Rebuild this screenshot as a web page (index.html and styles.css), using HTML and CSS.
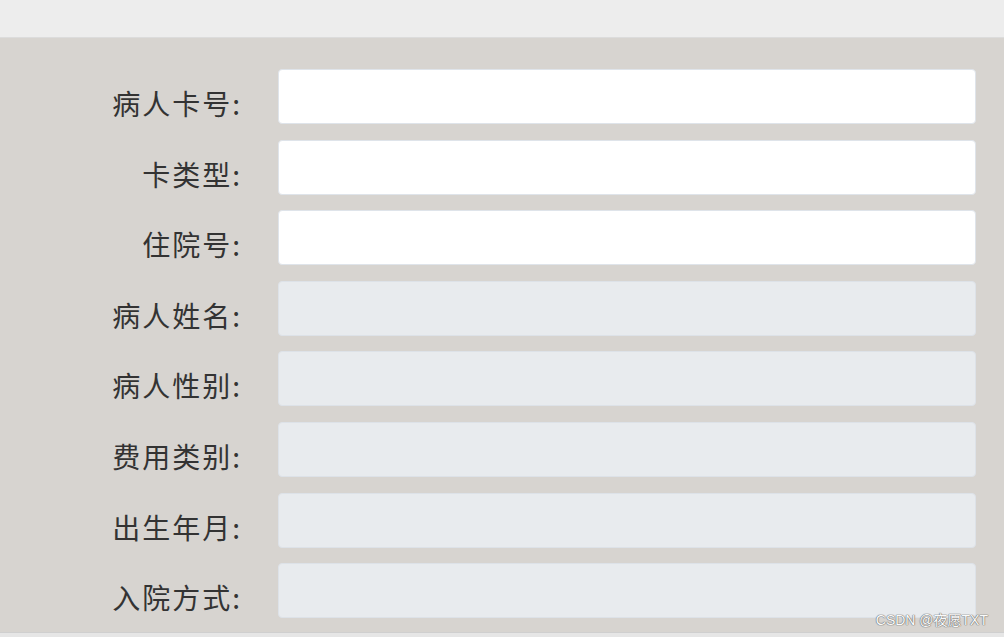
FILE: index.html
```html
<!DOCTYPE html>
<html lang="zh-CN">
<head>
<meta charset="utf-8">
<title>病人信息</title>
<link rel="stylesheet" href="styles.css">
</head>
<body>
<div class="page">
  <div class="topbar"></div>
  <div class="main">
    <form class="form">
      <label class="row"><span class="label">病人卡号:</span><input class="field" type="text"></label>
      <label class="row"><span class="label">卡类型:</span><input class="field" type="text"></label>
      <label class="row"><span class="label">住院号:</span><input class="field" type="text"></label>
      <label class="row"><span class="label">病人姓名:</span><input class="field" type="text" disabled></label>
      <label class="row"><span class="label">病人性别:</span><input class="field" type="text" disabled></label>
      <label class="row"><span class="label">费用类别:</span><input class="field" type="text" disabled></label>
      <label class="row"><span class="label">出生年月:</span><input class="field" type="text" disabled></label>
      <label class="row"><span class="label">入院方式:</span><input class="field" type="text" disabled></label>
    </form>
  </div>
  <div class="bottombar"></div>
  <div class="watermark">CSDN @夜愿TXT</div>
</div>
</body>
</html>
```
FILE: styles.css
```css
html, body {
  margin: 0;
  padding: 0;
}
body {
  width: 1004px;
  height: 637px;
  overflow: hidden;
  font-family: "Noto Sans CJK SC", "Noto Sans", sans-serif;
}
.page {
  position: relative;
  display: flex;
  flex-direction: column;
  height: 637px;
  background: #d7d4d0;
}
.topbar {
  height: 38px;
  background: #ededed;
  border-bottom: 1px solid #dcdcdc;
  box-sizing: border-box;
  flex: none;
}
.main {
  flex: 1;
  padding: 31px 28px 0 0;
}
.form {
  display: flex;
  flex-direction: column;
  gap: 15.6px;
  margin: 0;
}
.row {
  display: grid;
  grid-template-columns: 242px 1fr;
  column-gap: 36px;
  align-items: center;
}
.label {
  text-align: right;
  font-size: 28px;
  letter-spacing: 2px;
  color: #333333;
  line-height: 40px;
  padding-top: 13px;
}
.field {
  height: 55px;
  box-sizing: border-box;
  border: 1px solid #dfe4ea;
  border-radius: 4px;
  background: #ffffff;
  margin: 0;
  padding: 0 10px;
  font: inherit;
}
.field:disabled {
  background: #e8ebee;
  border-color: #dde2e8;
}
.bottombar {
  height: 4px;
  flex: none;
  background: #e6e6e6;
  border-top: 1px solid #cfcfcf;
}
.watermark {
  position: absolute;
  right: 16px;
  bottom: 8px;
  font-family: "Liberation Sans", "Noto Sans CJK SC", sans-serif;
  font-size: 14px;
  color: #fafafa;
  text-shadow: 0 0 1px #6e6e6e, 0 0 1px #6e6e6e, 0 0 1px #6e6e6e;
}
```
